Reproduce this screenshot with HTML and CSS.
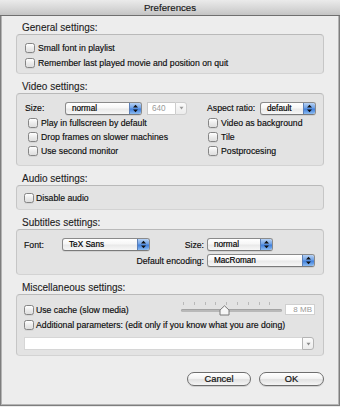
FILE: index.html
```html
<!DOCTYPE html>
<html>
<head>
<meta charset="utf-8">
<title>Preferences</title>
<link rel="stylesheet" href="styles.css">
</head>
<body>
<div class="window">
  <div class="titlebar">Preferences</div>
  <div class="content">

    <section class="group">
      <div class="group-title">General settings:</div>
      <div class="box box-general">
        <label class="check"><span class="cb"></span>Small font in playlist</label>
        <label class="check"><span class="cb"></span>Remember last played movie and position on quit</label>
      </div>
    </section>

    <section class="group">
      <div class="group-title">Video settings:</div>
      <div class="box box-video">
        <div class="video-col">
          <div class="field-row">
            <span class="lbl lbl-size">Size:</span>
            <div class="popup popup-size"><span class="val">normal</span><span class="arrow"><svg width="7" height="9" viewBox="0 0 7 9"><path d="M3.5 0.8 L6 3.6 L1 3.6 Z M3.5 8.2 L6 5.4 L1 5.4 Z" fill="#111"/></svg></span></div>
            <div class="combo combo-640"><span class="cval">640</span><span class="carrow"><svg width="5" height="4" viewBox="0 0 5 4"><path d="M0.5 0.8 L4.5 0.8 L2.5 3.4 Z" fill="#9a9a9a"/></svg></span></div>
          </div>
          <label class="check check-in"><span class="cb"></span>Play in fullscreen by default</label>
          <label class="check check-in"><span class="cb"></span>Drop frames on slower machines</label>
          <label class="check check-in"><span class="cb"></span>Use second monitor</label>
        </div>
        <div class="video-col">
          <div class="field-row">
            <span class="lbl lbl-aspect">Aspect ratio:</span>
            <div class="popup popup-aspect"><span class="val">default</span><span class="arrow"><svg width="7" height="9" viewBox="0 0 7 9"><path d="M3.5 0.8 L6 3.6 L1 3.6 Z M3.5 8.2 L6 5.4 L1 5.4 Z" fill="#111"/></svg></span></div>
          </div>
          <label class="check check-r"><span class="cb"></span>Video as background</label>
          <label class="check check-r"><span class="cb"></span>Tile</label>
          <label class="check check-r"><span class="cb"></span>Postprocesing</label>
        </div>
      </div>
    </section>

    <section class="group">
      <div class="group-title">Audio settings:</div>
      <div class="box box-audio">
        <label class="check"><span class="cb"></span>Disable audio</label>
      </div>
    </section>

    <section class="group">
      <div class="group-title">Subtitles settings:</div>
      <div class="box box-subs">
        <div class="sub-row">
          <span class="lbl lbl-font">Font:</span>
          <div class="popup popup-font"><span class="val">TeX Sans</span><span class="arrow"><svg width="7" height="9" viewBox="0 0 7 9"><path d="M3.5 0.8 L6 3.6 L1 3.6 Z M3.5 8.2 L6 5.4 L1 5.4 Z" fill="#111"/></svg></span></div>
          <span class="lbl lbl-right">Size:</span>
          <div class="popup popup-ssize"><span class="val">normal</span><span class="arrow"><svg width="7" height="9" viewBox="0 0 7 9"><path d="M3.5 0.8 L6 3.6 L1 3.6 Z M3.5 8.2 L6 5.4 L1 5.4 Z" fill="#111"/></svg></span></div>
          <span class="spacer-42"></span>
        </div>
        <div class="sub-row">
          <span class="lbl lbl-right">Default encoding:</span>
          <div class="popup popup-enc"><span class="val">MacRoman</span><span class="arrow"><svg width="7" height="9" viewBox="0 0 7 9"><path d="M3.5 0.8 L6 3.6 L1 3.6 Z M3.5 8.2 L6 5.4 L1 5.4 Z" fill="#111"/></svg></span></div>
        </div>
      </div>
    </section>

    <section class="group">
      <div class="group-title">Miscellaneous settings:</div>
      <div class="box box-misc">
        <div class="misc-row">
          <label class="check"><span class="cb"></span>Use cache (slow media)</label>
          <div class="slider">
            <div class="ticks"></div>
            <div class="track"></div>
            <svg class="thumb" width="11" height="11" viewBox="0 0 11 11"><path d="M5.5 0.8 L10 5 L10 10 L1 10 L1 5 Z" fill="#f7f7f7" stroke="#7a7a7a" stroke-width="1"/></svg>
          </div>
          <div class="mb-field">8 MB</div>
        </div>
        <label class="check"><span class="cb"></span>Additional parameters: (edit only if you know what you are doing)</label>
        <div class="combo combo-params"><span class="cval"></span><span class="carrow"><svg width="5" height="4" viewBox="0 0 5 4"><path d="M0.5 0.8 L4.5 0.8 L2.5 3.4 Z" fill="#8a8a8a"/></svg></span></div>
      </div>
    </section>

    <div class="buttons">
      <button class="btn btn-cancel">Cancel</button>
      <button class="btn btn-ok">OK</button>
    </div>
  </div>
</div>
</body>
</html>
```

FILE: styles.css
```css
* { box-sizing: border-box; }
html, body { margin: 0; padding: 0; }
body {
  width: 340px;
  height: 407px;
  overflow: hidden;
  font-family: "Liberation Sans", Arial, sans-serif;
  font-size: 8.7px;
  color: #0c0c0c;
  background: #ececec;
  -webkit-text-stroke: 0.15px #0c0c0c;
}
.window {
  width: 340px;
  height: 406px;
  border: 1px solid #7e7e7e;
  border-top: 0;
  box-shadow: inset 1px 0 #b4b4b4, inset -1px 0 #b4b4b4, inset 0 -1px #b4b4b4;
  background: #ededed;
}
.titlebar {
  height: 16px;
  line-height: 15px;
  text-align: center;
  font-size: 9.7px;
  color: #1a1a1a;
  background: linear-gradient(#ebebeb, #d5d5d5 60%, #c4c4c4);
  border-bottom: 1px solid #6f6f6f;
  margin: 0 -1px;
}
.content {
  padding: 6px 15px 0 15px;
  display: flex;
  flex-direction: column;
  gap: 7px;
}
.group-title {
  height: 12px;
  line-height: 12px;
  font-size: 10px;
  padding-left: 6px;
  color: #1c1c1c;
  -webkit-text-stroke: 0.1px #1c1c1c;
}
.box {
  background: #e3e3e3;
  border: 1px solid #c6c6c6;
  border-top-color: #b9b9b9;
  border-bottom-color: #d3d3d3;
  border-radius: 4px;
}
.check {
  display: flex;
  align-items: center;
  height: 15px;
  white-space: nowrap;
}
.cb {
  width: 10px;
  height: 10px;
  border: 1px solid #858585;
  border-radius: 2.5px;
  background: linear-gradient(#ffffff, #ececec 50%, #dedede);
  box-shadow: 0 1px 0 rgba(0,0,0,0.06);
  margin-right: 3px;
  flex: none;
}
.box-general {
  height: 40px;
  padding: 5px 8px 0 8px;
}
.box-video {
  height: 73px;
  padding: 6px 8px 0 8px;
  display: grid;
  grid-template-columns: 182px 1fr;
}
.video-col .check { height: 14px; }
.check-in { padding-left: 3px; }
.check-r { padding-left: 1px; }
.field-row {
  display: flex;
  align-items: center;
  height: 16px;
}
.lbl { white-space: nowrap; }
.lbl-size { width: 40px; }
.lbl-aspect { width: 53px; }

.popup {
  display: flex;
  align-items: stretch;
  height: 13px;
  border: 1px solid #8a8a8a;
  border-bottom-color: #7a7a7a;
  border-radius: 3px;
  background: linear-gradient(#ffffff, #f6f6f6 45%, #e9e9e9 55%, #f7f7f7);
  font-size: 8.2px;
  box-shadow: 0 1px 0 rgba(0,0,0,0.08);
  flex: none;
}
.popup .val {
  flex: 1;
  padding-left: 6px;
  line-height: 11px;
  color: #000;
  -webkit-text-stroke: 0.18px #000;
}
.popup .arrow {
  width: 12px;
  display: flex;
  align-items: center;
  justify-content: center;
  background: linear-gradient(#b7d2f4, #6fa1e6 45%, #3f7fdc 55%, #8dbcf1);
  border-left: 1px solid #5b7fb7;
  border-radius: 0 2px 2px 0;
}
.popup-size { width: 77px; }
.popup-aspect { width: 56px; }
.popup-font { width: 88px; }
.popup-ssize { width: 66px; }
.popup-enc { width: 108px; }

.combo {
  display: flex;
  align-items: stretch;
  height: 13px;
  flex: none;
}
.combo .cval {
  flex: 1;
  background: #ffffff;
  border: 1px solid #c9c9c9;
  border-right: 0;
  padding-left: 4px;
  line-height: 11px;
  color: #9a9a9a;
  -webkit-text-stroke: 0;
  font-size: 8.2px;
}
.combo .carrow {
  width: 12px;
  display: flex;
  align-items: center;
  justify-content: center;
  border: 1px solid #b4b4b4;
  border-radius: 0 3px 3px 0;
  background: linear-gradient(#fbfbfb, #ececec);
}
.combo-640 { width: 40px; margin-left: 5px; }
.combo-640 .carrow { border-color: #cdcdcd; }

.box-audio {
  height: 25px;
  padding: 4px 7px 0 7px;
}
.box-audio .cb, .box-misc .cb { margin-right: 2px; }

.box-subs {
  height: 46px;
  padding: 8px 8px 0 7px;
  display: flex;
  flex-direction: column;
  gap: 3px;
}
.sub-row {
  display: flex;
  align-items: center;
  height: 13px;
}
.lbl-font { width: 38px; }
.lbl-right {
  flex: 1;
  text-align: right;
  padding-right: 3px;
}
.spacer-42 { width: 42px; flex: none; }

.box-misc {
  height: 62px;
  padding: 7px 8px 0 7px;
}
.misc-row {
  display: flex;
  align-items: center;
  height: 15px;
}
.misc-row .check { flex: 1; }
.slider {
  position: relative;
  width: 101px;
  height: 15px;
  flex: none;
  margin-right: 3px;
}
.ticks {
  position: absolute;
  left: 2px;
  right: 2px;
  top: 0;
  height: 3px;
  background: repeating-linear-gradient(90deg, #b9b9b9 0 1px, transparent 1px 10.8px);
}
.track {
  position: absolute;
  left: 0;
  right: 0;
  top: 7px;
  height: 3px;
  border-radius: 2px;
  background: #b9b9b9;
  box-shadow: inset 0 1px 0 #a3a3a3;
}
.thumb {
  position: absolute;
  left: 38px;
  top: 3px;
}
.mb-field {
  width: 30px;
  height: 11px;
  flex: none;
  background: #ffffff;
  border: 1px solid #d0d0d0;
  color: #9a9a9a;
  -webkit-text-stroke: 0;
  font-size: 8px;
  line-height: 9px;
  text-align: right;
  padding-right: 2px;
}
.combo-params {
  width: 290px;
  margin-top: 5px;
}
.combo-params .cval { border-color: #d6d6d6; }

.buttons {
  display: flex;
  justify-content: flex-end;
  gap: 8px;
  margin-top: 9px;
}
.btn {
  height: 14px;
  padding: 0;
  border: 1px solid #6e6e6e;
  border-radius: 7px;
  background: linear-gradient(#ffffff, #f3f3f3 45%, #e2e2e2 55%, #f5f5f5);
  font-family: "Liberation Sans", Arial, sans-serif;
  font-size: 9.3px;
  color: #111;
  -webkit-text-stroke: 0.2px #111;
  line-height: 12px;
  box-shadow: 0 1px 0 rgba(0,0,0,0.12);
}
.btn-cancel { width: 64px; }
.btn-ok { width: 65px; }
```
